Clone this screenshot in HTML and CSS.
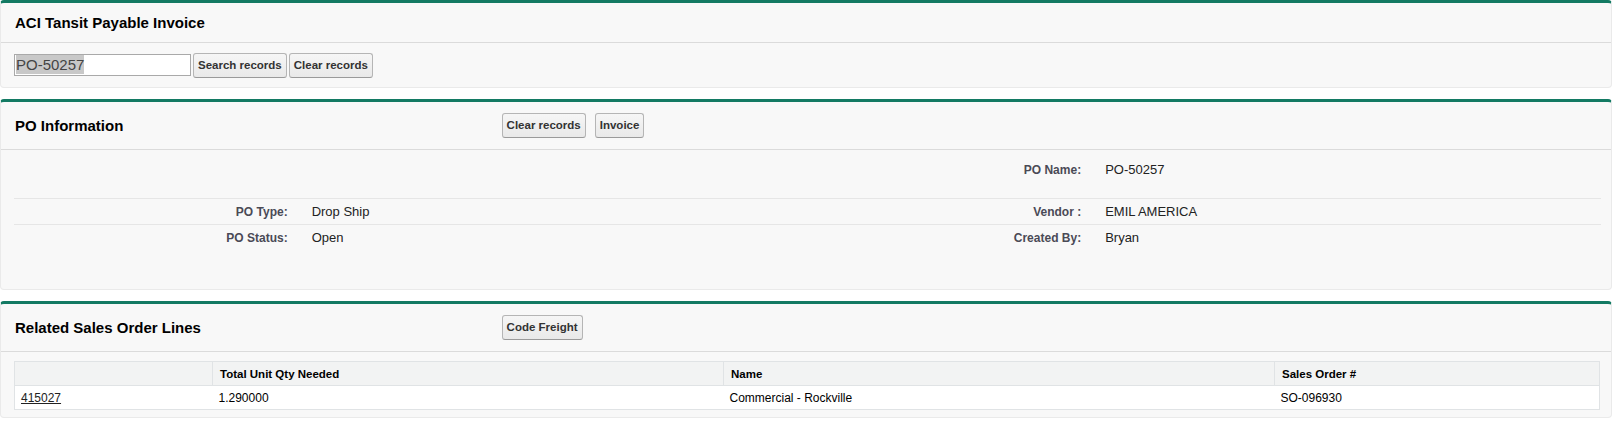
FILE: index.html
```html
<!DOCTYPE html>
<html lang="en">
<head>
    <meta charset="UTF-8">
    <meta name="viewport" content="width=device-width, initial-scale=1.0">
    <title>ACI Tansit Payable Invoice</title>
    <link rel="stylesheet" href="styles.css">
</head>
<body>
    <div class="page-block">
        <div class="pb-header">
            <h2 class="pb-title">ACI Tansit Payable Invoice</h2>
        </div>
        <div class="pb-body search-body">
            <div class="search-input"><span class="selected-text">PO-50257</span></div>
            <div class="btn-row tight">
                <button class="btn" type="button">Search records</button>
                <button class="btn" type="button">Clear records</button>
            </div>
        </div>
    </div>

    <div class="page-block">
        <div class="pb-header">
            <h2 class="pb-title title-col">PO Information</h2>
            <div class="btn-row">
                <button class="btn" type="button">Clear records</button>
                <button class="btn" type="button">Invoice</button>
            </div>
        </div>
        <div class="pb-body detail-body">
            <div class="detail-row first-row">
                <div class="label-col"></div>
                <div class="data-col"></div>
                <div class="label-col">PO Name:</div>
                <div class="data-col">PO-50257</div>
            </div>
            <div class="detail-row">
                <div class="label-col">PO Type:</div>
                <div class="data-col">Drop Ship</div>
                <div class="label-col">Vendor :</div>
                <div class="data-col">EMIL AMERICA</div>
            </div>
            <div class="detail-row last-row">
                <div class="label-col">PO Status:</div>
                <div class="data-col">Open</div>
                <div class="label-col">Created By:</div>
                <div class="data-col">Bryan</div>
            </div>
        </div>
    </div>

    <div class="page-block">
        <div class="pb-header">
            <h2 class="pb-title title-col">Related Sales Order Lines</h2>
            <div class="btn-row">
                <button class="btn" type="button">Code Freight</button>
            </div>
        </div>
        <div class="pb-body list-body">
            <table class="list">
                <thead>
                    <tr>
                        <th class="col-id"></th>
                        <th class="col-qty">Total Unit Qty Needed</th>
                        <th class="col-name">Name</th>
                        <th class="col-so">Sales Order #</th>
                    </tr>
                </thead>
                <tbody>
                    <tr>
                        <td><a href="#">415027</a></td>
                        <td>1.290000</td>
                        <td>Commercial - Rockville</td>
                        <td>SO-096930</td>
                    </tr>
                </tbody>
            </table>
        </div>
    </div>
</body>
</html>
```

FILE: styles.css
```css
body {
    font-family: "Liberation Sans", Arial, sans-serif;
    background-color: #fff;
    color: #000;
    margin: 0;
    padding: 0;
}
.page-block {
    background-color: #f8f8f8;
    border: 1px solid #eaeaea;
    border-top: 3px solid #137a63;
    border-radius: 4px;
    margin-bottom: 11px;
}
.pb-header {
    display: flex;
    align-items: center;
    height: 39px;
    padding: 0 14px;
    border-bottom: 1px solid #dbdbdb;
}
.page-block + .page-block .pb-header {
    height: 47px;
}
.pb-title {
    margin: 0;
    font-size: 15px;
    font-weight: bold;
    line-height: 18px;
    color: #000;
}
.title-col {
    width: calc(30% + 12px);
    flex-shrink: 0;
}
.btn-row {
    display: flex;
    gap: 9px;
}
.btn-row.tight {
    gap: 2px;
}
.btn {
    font-family: "Liberation Sans", Arial, sans-serif;
    font-size: 11.5px;
    font-weight: bold;
    line-height: 13px;
    height: 25px;
    color: #333;
    padding: 0 4px;
    background: linear-gradient(#f6f6f6, #e9e9e9);
    border: 1px solid #b5b5b5;
    border-bottom-color: #9a9a9a;
    border-radius: 3px;
    cursor: pointer;
}
.search-body {
    display: flex;
    align-items: center;
    gap: 2px;
    height: 44px;
    padding: 0 13px;
}
.search-input {
    width: 173px;
    height: 20px;
    padding: 0 1px;
    background-color: #fff;
    border: 1px solid #a9a9a9;
    font-size: 15px;
    line-height: 20px;
    color: #444;
}
.selected-text {
    background-color: #c8c8c8;
    padding: 1px 0;
}
.detail-body {
    padding: 0 10px 38px 13px;
}
.detail-row {
    display: grid;
    grid-template-columns: 18% 32% 18% 32%;
    border-bottom: 1px solid #e6e6e6;
    padding: 5px 0 4px;
    font-size: 13px;
    line-height: 16px;
}
.detail-row.first-row {
    padding: 12px 0 20px;
}
.detail-row.last-row {
    border-bottom: none;
    padding: 5px 0;
}
.label-col {
    text-align: right;
    padding-right: 12px;
    font-size: 12px;
    font-weight: bold;
    color: #4a4a56;
}
.data-col {
    padding-left: 12px;
    color: #222;
}
.list-body {
    padding: 9px 11px 7px 13px;
}
.list {
    width: 100%;
    border-collapse: collapse;
    background-color: #fff;
    border: 1px solid #e0e3e5;
    font-size: 12px;
}
.list th {
    background-color: #f2f3f3;
    text-align: left;
    font-size: 11.5px;
    font-weight: bold;
    color: #000;
    height: 23px;
    padding: 0 7px;
    border-left: 1px solid #e0e3e5;
    border-bottom: 1px solid #e0e3e5;
}
.list th:first-child {
    border-left: none;
}
.list td {
    height: 23px;
    padding: 0 6px;
    color: #000;
}
.list a {
    color: #222;
}
.col-id {
    width: 183px;
}
.col-qty {
    width: 496px;
}
.col-name {
    width: 536px;
}
```
